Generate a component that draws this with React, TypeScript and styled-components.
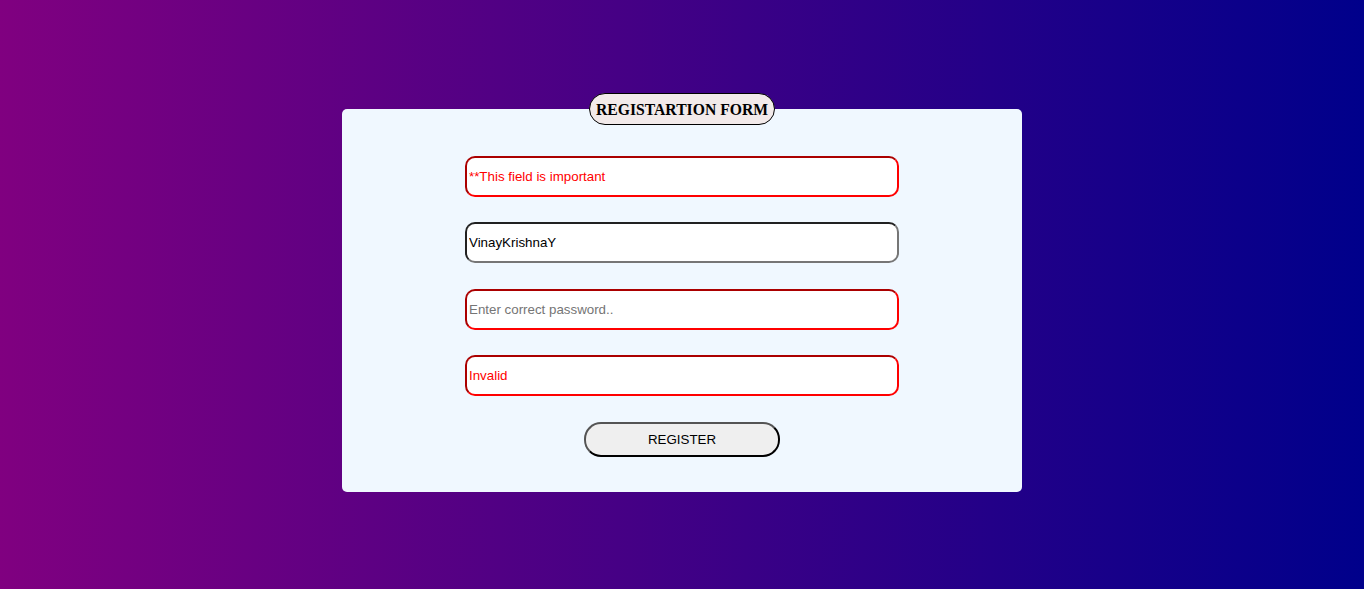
import React from 'react';
import styled, { createGlobalStyle } from 'styled-components';

const GlobalStyle = createGlobalStyle`
  html, body {
    margin: 0;
    padding: 0;
  }
  body {
    min-height: 100vh;
    background: linear-gradient(to right, #800080, #00008b);
  }
`;

const Page = styled.div`
  min-height: 100vh;
  padding-top: 93px;
  box-sizing: border-box;
`;

const Card = styled.fieldset`
  width: 680px;
  box-sizing: border-box;
  margin: 0 auto;
  padding: 31px 0 35px;
  border: none;
  border-radius: 5px;
  background-color: aliceblue;
`;

const Legend = styled.legend`
  margin: 0 auto;
  padding: 7px 6px 6px;
  border: 1px solid #000;
  border-radius: 16px;
  background-color: #f2eaea;
  font-family: 'Liberation Serif', 'Times New Roman', serif;
  font-weight: bold;
  font-size: 15.7px;
  line-height: 17px;
  color: #000;
`;

const Fields = styled.div`
  display: flex;
  flex-direction: column;
  align-items: center;
  gap: 25.33px;
`;

interface InputProps {
  $error?: boolean;
}
const Field = styled.input<InputProps>`
  width: 434px;
  height: 41px;
  box-sizing: border-box;
  padding: 1px 2px;
  border: 2px inset ${(p) => (p.$error ? 'red' : 'rgb(118, 118, 118)')};
  border-radius: 10px;
  background: #fff;
  font-family: 'Liberation Sans', Arial, sans-serif;
  font-size: 13.33px;
  color: ${(p) => (p.$error ? 'red' : '#000')};
  outline: none;

  &::placeholder {
    color: ${(p) => (p.$error ? 'red' : '#757575')};
  }
`;

const Placeholder = styled(Field)`
  &::placeholder {
    color: #757575;
  }
`;

const Button = styled.button`
  width: 196px;
  height: 35px;
  margin-top: 0.67px;
  border: 2px outset #000;
  border-radius: 17px;
  background-color: #efefef;
  font-family: 'Liberation Sans', Arial, sans-serif;
  font-size: 13.33px;
  color: #000;
`;

const App: React.FC = () => (
  <Page>
    <GlobalStyle />
    <Card>
      <Legend>REGISTARTION FORM</Legend>
      <Fields>
        <Field $error type="text" placeholder="**This field is important" />
        <Field type="text" defaultValue="VinayKrishnaY" />
        <Placeholder $error type="password" placeholder="Enter correct password.." />
        <Field $error type="text" placeholder="Invalid" />
        <Button type="button">REGISTER</Button>
      </Fields>
    </Card>
  </Page>
);

export default App;
